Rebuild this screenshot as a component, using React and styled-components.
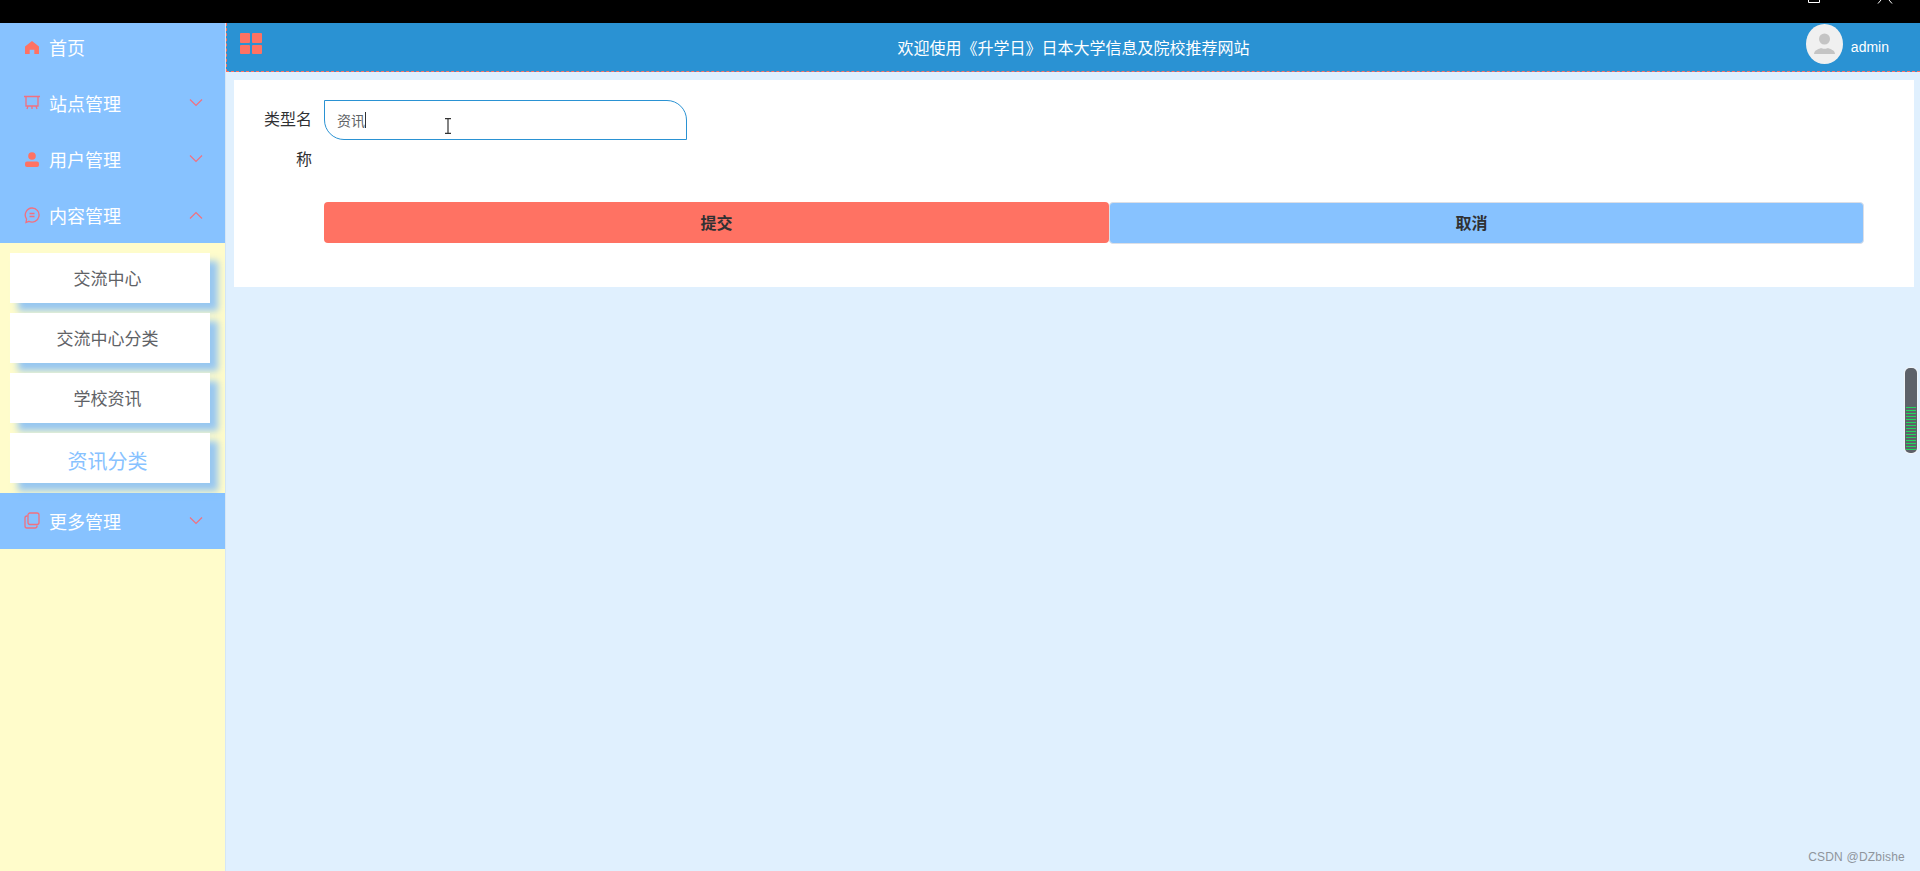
import React from "react";
import styled, { createGlobalStyle } from "styled-components";

const Global = createGlobalStyle`
  html, body { margin: 0; padding: 0; height: 100%; overflow: hidden; }
  body { font-family: "Liberation Sans", "Noto Sans CJK SC", sans-serif; }
  #root { height: 100%; }
`;

const Page = styled.div`
  height: 871px;
  display: flex;
  flex-direction: column;
  position: relative;
  background: #e0f0fe;
`;
const WindowBar = styled.div`
  height: 23px;
  flex: none;
  background: #000;
`;
const WindowIcon = styled.svg`
  position: absolute;
  top: 0;
  left: ${p => p.$left}px;
`;
const Body = styled.div`
  flex: 1;
  display: flex;
  min-height: 0;
`;
const Sidebar = styled.aside`
  width: 225px;
  flex: none;
  background: #fffccb;
  border-right: 1px solid #d5e6f5;
`;
const MenuRow = styled.div`
  height: ${p => (p.$first ? 52 : 56)}px;
  box-sizing: border-box;
  display: flex;
  align-items: center;
  padding: 0 22px ${p => (p.$first ? 4 : 0)}px 24px;
  background: #87c2ff;
  color: #fff;
  font-size: 18px;
`;
const MenuIcon = styled.span`
  width: 16px;
  height: 18px;
  margin-right: 9px;
  display: flex;
  align-items: center;
  justify-content: center;
`;
const MenuLabel = styled.span`
  flex: 1;
`;
const SubMenu = styled.div`
  padding: 10px 15px 10px 10px;
  display: flex;
  flex-direction: column;
  gap: 10px;
`;
const SubItem = styled.div`
  height: 50px;
  box-sizing: border-box;
  background: #fff;
  box-shadow: 8px 8px 7px rgba(125, 185, 250, 0.8);
  display: flex;
  align-items: center;
  justify-content: center;
  padding: ${p => (p.$active ? "5px 5px 0 0" : "0 5px 2px 0")};
  color: ${p => (p.$active ? "#87c2ff" : "#606266")};
  font-size: ${p => (p.$active ? 20 : 17)}px;
`;
const Main = styled.main`
  flex: 1;
  min-width: 0;
  display: flex;
  flex-direction: column;
`;
const Header = styled.header`
  height: 48px;
  flex: none;
  box-sizing: content-box;
  background: #2a92d3;
  border-left: 1px dashed #ff7263;
  border-bottom: 1px dashed #ff7263;
  display: flex;
  align-items: center;
  position: relative;
  color: #fff;
`;
const Grid = styled.div`
  position: absolute;
  left: 13px;
  top: 10px;
  display: grid;
  grid-template-columns: 10px 10px;
  grid-auto-rows: 9.5px;
  gap: 2px;
`;
const GridCell = styled.i`
  display: block;
  background: #ff7263;
  border-radius: 1px;
`;
const Title = styled.div`
  flex: 1;
  text-align: center;
  font-size: 16px;
`;
const UserBox = styled.div`
  position: absolute;
  right: 31px;
  top: 1px;
  display: flex;
  align-items: center;
  gap: 8px;
  font-size: 14px;
`;
const UserName = styled.span`
  padding-top: 6px;
`;
const Avatar = styled.svg`
  width: 37px;
  height: 40px;
  display: block;
`;
const Card = styled.section`
  height: 167px;
  margin: 8px 6px 0 8px;
  padding: 20px 50px 20px 30px;
  background: #fff;
`;
const FormRow = styled.div`
  display: flex;
  margin-bottom: 22px;
`;
const Label = styled.label`
  width: 48px;
  padding-right: 12px;
  flex: none;
  font-size: 16px;
  line-height: 40px;
  text-align: right;
  color: #303133;
`;
const InputBox = styled.div`
  width: 363px;
  height: 40px;
  box-sizing: border-box;
  border: 1px solid #2a92d3;
  border-radius: 0 20px 0 20px;
  padding: 0 12px;
  display: flex;
  align-items: center;
  font-size: 14px;
  color: #606266;
`;
const Caret = styled.span`
  width: 1px;
  height: 16px;
  background: #303133;
`;
const Buttons = styled.div`
  display: flex;
  align-items: flex-start;
  margin-left: 60px;
`;
const Button = styled.button`
  font-family: inherit;
  font-size: 16px;
  font-weight: 700;
  color: #303133;
  border-radius: 4px;
  box-sizing: border-box;
  padding: 0;
  cursor: pointer;
`;
const SubmitButton = styled(Button)`
  width: 785px;
  flex: none;
  height: 41px;
  border: 0;
  background: #ff7263;
  padding-bottom: 2px;
`;
const CancelButton = styled(Button)`
  flex: 1;
  height: 42px;
  border: 1px solid #dcdfe6;
  background: #87c2ff;
  padding: 0 30px 2px 0;
`;
const TextCursor = styled.svg`
  position: absolute;
  left: 444px;
  top: 118px;
`;
const ScrollGadget = styled.div`
  position: absolute;
  left: 1905px;
  top: 368px;
  width: 12px;
  height: 85px;
  border-radius: 5px;
  background: #5d6169;
  box-shadow: 0 0 0 1px #f0f4f8;
  overflow: hidden;
`;
const ScrollStripes = styled.div`
  position: absolute;
  left: 1px;
  right: 1px;
  top: 39px;
  bottom: 2px;
  background: repeating-linear-gradient(to bottom, #22d65e 0 1px, #5d6169 1px 3px);
`;
const Watermark = styled.div`
  position: absolute;
  right: 15px;
  bottom: 7px;
  font-size: 12px;
  letter-spacing: 0.2px;
  color: #8f959c;
`;

const Stroke = ({ children, w = 16, h = 18, vb = "0 0 16 18" }) => (
  <svg width={w} height={h} viewBox={vb} fill="none" stroke="#f2707f" strokeWidth="1.3">{children}</svg>
);
const HomeIcon = () => (
  <svg width="14" height="13" viewBox="0 0 15 14"><path d="M7.5 0 15 6v8H10V9.5H5V14H0V6z" fill="#ff7263" /></svg>
);
const BoardIcon = () => (
  <Stroke>
    <path d="M0 2.5h16M2 3v9h12V3M4 12l-1 3M12 12l1 3M8 12v3" />
  </Stroke>
);
const UserIcon = () => (
  <svg width="14" height="15" viewBox="0 0 14 15">
    <circle cx="7" cy="4" r="3.8" fill="#ff7263" />
    <rect x="0" y="9.5" width="14" height="5.5" rx="2" fill="#ff7263" />
  </svg>
);
const ChatIcon = () => (
  <Stroke>
    <path d="M8 2a7 7 0 1 1-3 13.3L2 16.5l.6-3.4A7 7 0 0 1 8 2z" />
    <path d="M5.5 7.5h5M5.5 10.5h5" />
  </Stroke>
);
const CopyIcon = () => (
  <Stroke>
    <rect x="4" y="1" width="11" height="11.5" rx="2" />
    <path d="M3.5 4H3a2 2 0 0 0-2 2v8a2 2 0 0 0 2 2h8a2 2 0 0 0 2-2v-.5" />
  </Stroke>
);
const Chevron = ({ up }) => (
  <svg width="14" height="8" viewBox="0 0 14 8" fill="none" stroke="#f2707f" strokeWidth="1.2">
    <path d={up ? "M1 7.5 7 1.5l6 6" : "M1 .5l6 6 6-6"} />
  </svg>
);

const MenuItem = ({ icon, label, first, chevron, up }) => (
  <MenuRow $first={first}>
    <MenuIcon>{icon}</MenuIcon>
    <MenuLabel>{label}</MenuLabel>
    {chevron && <Chevron up={up} />}
  </MenuRow>
);

export default function App() {
  return (
    <Page>
      <Global />
      <WindowBar />
      <WindowIcon $left={1808} width="12" height="3" viewBox="0 0 12 3" fill="none" stroke="#fff">
        <path d="M.5 0v2.5h11V0" />
      </WindowIcon>
      <WindowIcon $left={1877} width="16" height="4" viewBox="0 0 16 4" fill="none" stroke="#fff">
        <path d="M1 3.5 4 0M15 3.5 12 0" />
      </WindowIcon>
      <Body>
        <Sidebar>
          <MenuItem first icon={<HomeIcon />} label="首页" />
          <MenuItem icon={<BoardIcon />} label="站点管理" chevron />
          <MenuItem icon={<UserIcon />} label="用户管理" chevron />
          <MenuItem icon={<ChatIcon />} label="内容管理" chevron up />
          <SubMenu>
            <SubItem>交流中心</SubItem>
            <SubItem>交流中心分类</SubItem>
            <SubItem>学校资讯</SubItem>
            <SubItem $active>资讯分类</SubItem>
          </SubMenu>
          <MenuItem icon={<CopyIcon />} label="更多管理" chevron />
        </Sidebar>
        <Main>
          <Header>
            <Grid>
              <GridCell /><GridCell /><GridCell /><GridCell />
            </Grid>
            <Title>欢迎使用《升学日》日本大学信息及院校推荐网站</Title>
            <UserBox>
              <Avatar viewBox="0 0 37 40">
                <ellipse cx="18.5" cy="20" rx="18.5" ry="20" fill="#f0f0f0" />
                <circle cx="18.5" cy="15" r="5.5" fill="#c4c4c4" />
                <path d="M8 30c0-4 5-5 7-6 1 1 6 1 7 0 2 1 7 2 7 6z" fill="#c4c4c4" />
              </Avatar>
              <UserName>admin</UserName>
            </UserBox>
          </Header>
          <Card>
            <FormRow>
              <Label>类型名称</Label>
              <InputBox>资讯<Caret /></InputBox>
            </FormRow>
            <Buttons>
              <SubmitButton>提交</SubmitButton>
              <CancelButton>取消</CancelButton>
            </Buttons>
          </Card>
        </Main>
      </Body>
      <TextCursor width="8" height="16" viewBox="0 0 8 16" fill="none" stroke="#333" strokeWidth="1.2">
        <path d="M1 .6h6M1 15.4h6M4 .6v14.8" />
      </TextCursor>
      <ScrollGadget><ScrollStripes /></ScrollGadget>
      <Watermark>CSDN @DZbishe</Watermark>
    </Page>
  );
}
